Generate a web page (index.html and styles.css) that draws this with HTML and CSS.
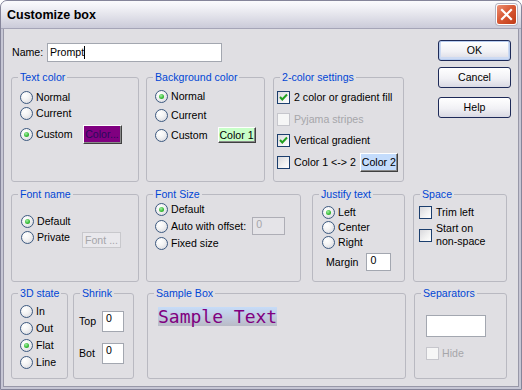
FILE: index.html
```html
<!DOCTYPE html>
<html>
<head>
<meta charset="utf-8">
<title>Customize box</title>
<link rel="stylesheet" href="styles.css">
</head>
<body>
<div class="window">
  <div class="titlebar">
    <span class="title">Customize box</span>
    <span class="close"><svg width="13" height="13" viewBox="0 0 13 13"><path d="M2 2 L11 11 M11 2 L2 11" stroke="#fff" stroke-width="2.2" stroke-linecap="square" fill="none"/></svg></span>
  </div>
  <div class="client">
    <div class="top">
      <div class="main">
        <div class="name-row">
          <span class="name-label">Name:</span>
          <div class="field name-field">Prompt<span class="caret"></span></div>
        </div>
        <div class="row row1">
          <fieldset class="group w-tc">
            <legend>Text color</legend>
            <div class="gbody tc">
              <div class="opt"><span class="radio"></span><span class="rl">Normal</span></div>
              <div class="opt"><span class="radio"></span><span class="rl">Current</span></div>
              <div class="opt opt-custom"><span class="radio on"></span><span class="rl">Custom</span><span class="cbtn purple">Color...</span></div>
            </div>
          </fieldset>
          <fieldset class="group w-bg">
            <legend>Background color</legend>
            <div class="gbody bg">
              <div class="opt"><span class="radio on"></span><span class="rl">Normal</span></div>
              <div class="opt"><span class="radio"></span><span class="rl">Current</span></div>
              <div class="opt"><span class="radio"></span><span class="rl">Custom</span><span class="cbtn green">Color 1</span></div>
            </div>
          </fieldset>
          <fieldset class="group w-2c">
            <legend>2-color settings</legend>
            <div class="gbody twoc">
              <div class="crow"><span class="cb on"><svg width="11" height="11" viewBox="0 0 11 11"><path d="M2 5 L4.3 7.5 L9 2.5" stroke="#21a121" stroke-width="2" fill="none"/></svg></span><span class="cl">2 color or gradient fill</span></div>
              <div class="crow"><span class="cb off"></span><span class="cl dis">Pyjama stripes</span></div>
              <div class="crow"><span class="cb on"><svg width="11" height="11" viewBox="0 0 11 11"><path d="M2 5 L4.3 7.5 L9 2.5" stroke="#21a121" stroke-width="2" fill="none"/></svg></span><span class="cl">Vertical gradient</span></div>
              <div class="crow"><span class="cb"></span><span class="cl">Color 1 &lt;-&gt; 2</span><span class="cbtn blue">Color 2</span></div>
            </div>
          </fieldset>
        </div>
      </div>
      <div class="buttons">
        <div class="btn default">OK</div>
        <div class="btn">Cancel</div>
        <div class="btn help">Help</div>
      </div>
    </div>

    <div class="row row2">
      <fieldset class="group w-fn">
        <legend>Font name</legend>
        <div class="gbody fn">
          <div class="opt"><span class="radio on"></span><span class="rl">Default</span></div>
          <div class="opt"><span class="radio"></span><span class="rl">Private</span><span class="cbtn disabled">Font ...</span></div>
        </div>
      </fieldset>
      <fieldset class="group w-fs">
        <legend>Font Size</legend>
        <div class="gbody fs">
          <div class="opt"><span class="radio on"></span><span class="rl">Default</span></div>
          <div class="opt opt-auto"><span class="radio"></span><span class="rl">Auto with offset:</span><div class="field off-field">0</div></div>
          <div class="opt"><span class="radio"></span><span class="rl">Fixed size</span></div>
        </div>
      </fieldset>
      <fieldset class="group w-jt">
        <legend>Justify text</legend>
        <div class="gbody jt">
          <div class="opt opt-s"><span class="radio on"></span><span class="rl">Left</span></div>
          <div class="opt opt-s"><span class="radio"></span><span class="rl">Center</span></div>
          <div class="opt opt-s"><span class="radio"></span><span class="rl">Right</span></div>
          <div class="margin-row"><span>Margin</span><div class="field margin-field">0</div></div>
        </div>
      </fieldset>
      <fieldset class="group w-sp">
        <legend>Space</legend>
        <div class="gbody sp">
          <div class="srow"><span class="cb"></span><span class="cl">Trim left</span></div>
          <div class="srow srow2"><span class="cb"></span><span class="cl">Start on<br>non-space</span></div>
        </div>
      </fieldset>
    </div>

    <div class="row row3">
      <fieldset class="group w-3d">
        <legend>3D state</legend>
        <div class="gbody td">
          <div class="opt opt-t"><span class="radio"></span><span class="rl">In</span></div>
          <div class="opt opt-t"><span class="radio"></span><span class="rl">Out</span></div>
          <div class="opt opt-t"><span class="radio on"></span><span class="rl">Flat</span></div>
          <div class="opt opt-t"><span class="radio"></span><span class="rl">Line</span></div>
        </div>
      </fieldset>
      <fieldset class="group w-sh">
        <legend>Shrink</legend>
        <div class="gbody sh">
          <div class="shrow"><span class="shl">Top</span><div class="field sh-field">0</div></div>
          <div class="shrow shrow2"><span class="shl">Bot</span><div class="field sh-field">0</div></div>
        </div>
      </fieldset>
      <fieldset class="group w-sb">
        <legend>Sample Box</legend>
        <div class="gbody sb">
          <span class="sample">Sample Text</span>
        </div>
      </fieldset>
      <fieldset class="group w-sep">
        <legend>Separators</legend>
        <div class="gbody sep">
          <div class="field sep-field"></div>
          <div class="crow hide-row"><span class="cb off"></span><span class="cl dis">Hide</span></div>
        </div>
      </fieldset>
    </div>
  </div>
</div>
</body>
</html>
```
FILE: styles.css
```css
* { box-sizing: border-box; }
html, body { margin: 0; padding: 0; background: #ffffff; }
body {
  font-family: "Liberation Sans", Arial, sans-serif;
  font-size: 10.6px;
  line-height: 13px;
  color: #000;
}

.window {
  width: 522px;
  height: 390px;
  background: #c6c6d4;
  border: 1px solid #85859a;
  border-radius: 7px 7px 0 0;
  display: flex;
  flex-direction: column;
  overflow: hidden;
}

.titlebar {
  height: 28px;
  flex: none;
  display: flex;
  align-items: center;
  justify-content: space-between;
  padding: 0 4px 0 6px;
  background: linear-gradient(#fbfbfd 0%, #f4f4f8 18%, #e2e2ea 55%, #cbcbd9 100%);
  border-bottom: 1px solid #a5a5b7;
}
.title {
  font-weight: bold;
  font-size: 12.5px;
  line-height: 16px;
  color: #000;
}
.close {
  width: 21px;
  height: 21px;
  border: 1px solid #fff;
  border-radius: 3px;
  background: linear-gradient(135deg, #ec9074 0%, #d95a36 45%, #c03b17 100%);
  box-shadow: 0 0 0 1px #b4b4c2;
  display: flex;
  align-items: center;
  justify-content: center;
}

.client {
  flex: 1;
  margin: 0 2px 2px;
  border: 1px solid #9898a8;
  border-top: none;
  background: #e0dfe3;
  padding-left: 7px;
}

.top { display: flex; }
.main { width: 393px; }

.name-row {
  display: flex;
  align-items: center;
  margin-top: 14px;
  height: 19px;
  padding-left: 1px;
}
.name-label { width: 35px; }

.field {
  background: #fff;
  border: 1px solid #a3a7b0;
  padding: 0 3px;
  line-height: 13px;
}
.name-field {
  width: 175px;
  height: 19px;
  display: flex;
  align-items: center;
  padding-left: 2px;
}
.caret { width: 1px; height: 13px; background: #000; margin-left: 0; }

.buttons {
  margin-left: 34px;
  margin-top: 11px;
  width: 73px;
  display: flex;
  flex-direction: column;
}
.btn {
  height: 21px;
  border: 1px solid #1e2a58;
  border-radius: 3px;
  background: linear-gradient(#ffffff 0%, #f1f1f5 55%, #d9d9e3 100%);
  display: flex;
  align-items: center;
  justify-content: center;
}
.btn + .btn { margin-top: 6px; }
.btn.help { margin-top: 9px; }
.btn.default { box-shadow: inset 0 0 0 1px #b6cbee, inset 0 -1px 0 2px #cddaf2; }

.row { display: flex; }
.row1 { margin-top: 9px; height: 111px; }
.row2 { margin-top: 6px; height: 94px; }
.row3 { margin-top: 5px; height: 92px; }

.group {
  margin: 0;
  padding: 0;
  border: 1px solid #b9b9c1;
  border-radius: 3px;
  min-width: 0;
  flex: none;
}
.group legend {
  margin-left: 6px;
  padding: 0 2px;
  color: #0046d5;
  line-height: 13px;
}

.w-tc { width: 128px; }
.w-bg { width: 119px; margin-left: 7px; }
.w-2c { width: 131px; margin-left: 8px; }
.w-fn { width: 128px; }
.w-fs { width: 155px; margin-left: 7px; }
.w-jt { width: 93px; margin-left: 11px; }
.w-sp { width: 94px; margin-left: 8px; }
.w-3d { width: 57px; }
.w-sh { width: 61px; margin-left: 5px; }
.w-sb { width: 259px; margin-left: 13px; }
.w-sep { width: 93px; margin-left: 8px; }

/* radios */
.opt { display: flex; align-items: center; height: 16px; }
.rl { margin-left: 3px; white-space: nowrap; }
.radio {
  width: 13px;
  height: 13px;
  flex: none;
  border: 1px solid #3d5a80;
  border-radius: 50%;
  background: radial-gradient(circle at 35% 30%, #ffffff 0%, #f4f4f4 40%, #d2d2da 100%);
  display: flex;
  align-items: center;
  justify-content: center;
}
.radio.on::after {
  content: "";
  width: 5px;
  height: 5px;
  border-radius: 50%;
  background: radial-gradient(circle at 40% 35%, #a6eea6 0%, #3bbf3b 55%, #1c8c1c 100%);
}

/* checkboxes */
.cb {
  width: 13px;
  height: 13px;
  flex: none;
  border: 1px solid #1c3f6e;
  background: linear-gradient(135deg, #d8d8dc 0%, #f2f2f2 60%, #ffffff 100%);
  display: flex;
  align-items: center;
  justify-content: center;
}
.cb.off { border-color: #c6c6cc; background: #f6f6f6; }
.cl { margin-left: 4px; white-space: nowrap; }
.cl.dis { color: #a6a6aa; }
.crow { display: flex; align-items: center; height: 19px; }

/* colour buttons */
.cbtn {
  display: flex;
  align-items: center;
  justify-content: center;
  flex: none;
  border-top: 1px solid #ffffff;
  border-left: 1px solid #ffffff;
  border-right: 1px solid #404040;
  border-bottom: 1px solid #404040;
  box-shadow: inset -1px -1px 0 #8a8a8a;
}
.cbtn.purple { width: 39px; height: 19px; margin-left: 10px; background: #800080; color: #2a0a5a; }
.cbtn.green { width: 38px; height: 16px; margin-left: 10px; background: #c8ffc8; }
.cbtn.blue { width: 38px; height: 19px; margin-left: 4px; background: #c4dcfc; }
.cbtn.disabled {
  width: 39px;
  height: 16px;
  margin-left: 12px;
  margin-top: 6px;
  background: #e9e8ec;
  color: #a6a6aa;
  border: 1px solid #c8c8cc;
  box-shadow: none;
}

/* group bodies */
.gbody.tc { padding: 5px 0 0 8px; }
.tc .opt-custom { height: 19px; margin-top: 4px; }

.gbody.bg { padding: 4px 0 0 8px; }
.bg .opt:nth-child(2) { margin-top: 3px; }
.bg .opt:nth-child(3) { margin-top: 4px; }

.gbody.twoc { padding: 4px 0 0 3px; }
.twoc .crow:nth-child(2) { margin-top: 3px; }
.twoc .crow:nth-child(3) { margin-top: 2px; }
.twoc .crow:nth-child(4) { margin-top: 3px; }

.gbody.fn { padding: 12px 0 0 9px; }

.gbody.fs { padding: 0 0 0 8px; }
.fs .opt-auto { height: 18px; }
.off-field {
  width: 33px;
  height: 18px;
  margin-left: 6px;
  background: #e5e4e8;
  border-color: #aeaeb6;
  color: #a6a6aa;
}

.gbody.jt { padding: 4px 0 0 9px; }
.jt .opt-s { height: 15px; }
.margin-row {
  display: flex;
  align-items: center;
  height: 18px;
  margin-top: 3px;
  margin-left: 4px;
}
.margin-field { width: 25px; height: 18px; margin-left: 8px; }

.gbody.sp { padding: 5px 0 0 5px; }
.srow { display: flex; align-items: center; height: 13px; }
.srow2 { height: 26px; margin-top: 3px; }

.gbody.td { padding: 3px 0 0 8px; }
.td .opt-t { height: 17px; }

.gbody.sh { padding: 11px 0 0 5px; }
.shrow { display: flex; align-items: center; height: 21px; }
.shrow2 { margin-top: 11px; }
.shl { width: 23px; }
.sh-field { width: 22px; height: 21px; }

.gbody.sb { padding: 7px 0 0 10px; }
.sample {
  display: inline-block;
  height: 19px;
  line-height: 19px;
  font-family: "DejaVu Sans Mono", "Liberation Mono", monospace;
  font-size: 18px;
  color: #800080;
  background: linear-gradient(#c6dcf8 0%, #c2cbe0 50%, #b9bbc6 100%);
  vertical-align: top;
}

.gbody.sep { padding: 15px 0 0 11px; }
.sep-field { width: 60px; height: 22px; }
.hide-row { height: 13px; margin-top: 10px; }
.hide-row .cl { margin-left: 3px; }
```
